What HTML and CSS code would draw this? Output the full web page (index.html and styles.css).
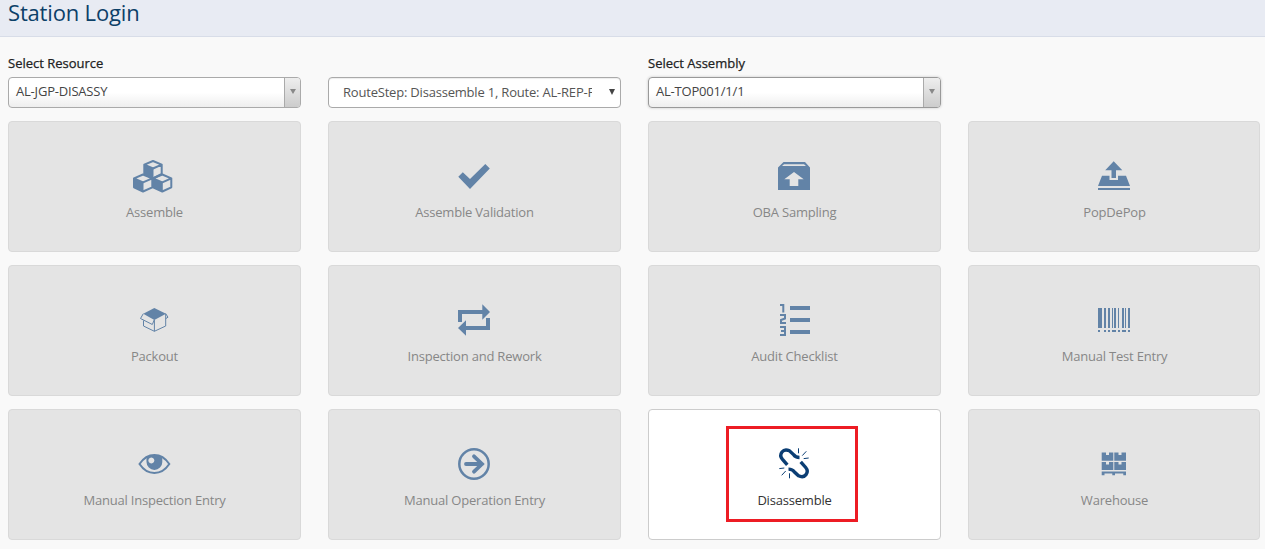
FILE: index.html
```
<!DOCTYPE html>
<html lang="en">
<head>
<meta charset="utf-8">
<title>Station Login</title>
<link rel="stylesheet" href="styles.css">
</head>
<body>
<header class="header"><h1 class="title">Station Login</h1></header>
<main class="content">
  <div class="filters">
    <div class="field">
      <label class="field-label">Select Resource</label>
      <div class="combo"><span class="combo-text">AL-JGP-DISASSY</span><span class="combo-button"><i class="arrow"></i></span></div>
    </div>
    <div class="field">
      <div class="select"><span class="select-text">RouteStep: Disassemble 1, Route: AL-REP-F</span><i class="arrow arrow-dark"></i></div>
    </div>
    <div class="field">
      <label class="field-label">Select Assembly</label>
      <div class="combo combo-focus"><span class="combo-text">AL-TOP001/1/1</span><span class="combo-button"><i class="arrow"></i></span></div>
    </div>
  </div>
  <div class="grid">
    <div class="card">
      <svg class="icon" viewBox="0 0 49 48">
        <g fill="none" stroke="currentColor" stroke-width="2" stroke-linejoin="round">
          <path d="M23 9l8.700 3.600v9.400L23 26.500 14.300 22v-9.400zM14.300 12.600L23 16.500l8.700-3.900"/>
          <path d="M13 22.500l9.300 3.800v9L13 39.500 4 35.300v-9zM4 26.300l9 4 9.300-4"/>
          <path d="M32.300 22.500l9 3.800v9l-9 4.200-9.300-4.200v-9zM23 26.300l9.300 4 9-4"/>
        </g>
        <path fill="currentColor" d="M14 12.500l9.500 4.200V27L14 22zM4 26.200l9.500 4.200v9.300L4 35.400zM23 26.200l9.800 4.200v9.300L23 35.400z"/>
      </svg>
      <span class="name">Assemble</span>
    </div>
    <div class="card">
      <svg class="icon" viewBox="0 0 49 48"><path fill="currentColor" d="M8.300 24.700l4.500-4.500 7.200 6.900L35.300 12l4.500 4.600L20 37z"/></svg>
      <span class="name">Assemble Validation</span>
    </div>
    <div class="card">
      <svg class="icon" viewBox="0 0 49 48"><path fill="currentColor" fill-rule="evenodd" d="M13.500 10h21.500l5 5.500V38H8V15.500zM14 12.200L12 14h24l-2-1.800zM24 20l-9.700 7.200h5.400V34h8.600v-6.800h5.400z"/></svg>
      <span class="name">OBA Sampling</span>
    </div>
    <div class="card">
      <svg class="icon" viewBox="0 0 49 48"><path fill="currentColor" d="M23.700 9.300l8.600 9H26V26h-4.500v-7.700h-6.300zM12 23.700h7.500V28H28v-4.300h8L40 34H8zM8 36h32v2H8z"/></svg>
      <span class="name">PopDePop</span>
    </div>
    <div class="card">
      <svg class="icon" viewBox="0 0 49 48">
        <path fill="currentColor" d="M24.300 12L36 17.700 24.300 24 13.300 17.700z"/>
        <path fill="none" stroke="currentColor" d="M13.300 17.700l-2.800 4.800 11.800 6 2-4.700M13.500 24.500V30l10.900 5.300L35.700 30V17.700l2.300 3.500-2.300 1.500M24.400 24v11.300"/>
      </svg>
      <span class="name">Packout</span>
    </div>
    <div class="card">
      <svg class="icon" viewBox="0 0 49 48"><path fill="currentColor" d="M8 14h24.300V8.300L40 16l-7.700 7.700V18H12v8H8zM40 34H16v5.700L8 32l8-7.700V30h20v-8h4z"/></svg>
      <span class="name">Inspection and Rework</span>
    </div>
    <div class="card">
      <svg class="icon" viewBox="0 0 49 48">
        <path fill="currentColor" d="M20 10h20v4H20zM20 22h20v4H20zM20 34h20v4H20z"/>
        <path fill="none" stroke="currentColor" stroke-width="2" d="M10 9h3.300v7.500M10 19h5v3.500l-4 1.500v3h5M10 31h5v8h-5M11 35h4"/>
      </svg>
      <span class="name">Audit Checklist</span>
    </div>
    <div class="card">
      <svg class="icon" viewBox="0 0 49 48"><path fill="currentColor" d="M8 12h4v20H8zM14 12h2v20h-2zM18 12h2v20h-2zM22 12h1v20h-1zM24 12h2v20h-2zM28 12h1v20h-1zM32 12h2v20h-2zM35 12h1v20h-1zM38 12h2v20h-2zM8 34h2v2H8zM14 34h2v2h-2zM18 34h2v2h-2zM22 34h4v2h-4zM28 34h2v2h-2zM32 34h4v2h-4zM38 34h2v2h-2z"/></svg>
      <span class="name">Manual Test Entry</span>
    </div>
    <div class="card">
      <svg class="icon" viewBox="0 0 49 48">
        <path fill="none" stroke="currentColor" stroke-width="2" d="M9.500 24Q15.500 15 24.400 15T39.300 24Q33.300 33 24.400 33T9.500 24z"/>
        <path fill="currentColor" fill-rule="evenodd" d="M17 17Q24.400 13 31.600 17Q32.800 19 32.300 22a7.900 7.900 0 0 1-15.800 0Q16 19 17 17zM21.300 17.500a3 3 0 1 0 .1 0z"/>
      </svg>
      <span class="name">Manual Inspection Entry</span>
    </div>
    <div class="card">
      <svg class="icon" viewBox="0 0 49 48" fill="none" stroke="currentColor"><circle cx="24" cy="24" r="14.700" stroke-width="2.500"/><path stroke-width="3.800" stroke-linecap="round" d="M16 24h16M24 16.300l8 7.700-8 7.700"/></svg>
      <span class="name">Manual Operation Entry</span>
    </div>
    <div class="card card-active">
      <svg class="icon" viewBox="0 0 49 48" fill="none" stroke="currentColor">
        <path stroke-width="3.400" d="M17.300 24.800l-5-5.700Q9.300 15.500 12 12t7.500-1.200L23.500 14.500q2 3 6 3M30.700 21.800l5 5.700q3 3.600.3 7.100t-7.500 1.200L24.500 32.100q-2-3-6-3"/>
        <path stroke-width="1" d="M28.500 8.300v5M36.300 11.300l-4 4.300M38.700 18l-5 .6M19.500 38.300v-5M11.700 35.300l4-4.300M9.300 28.600l5-.6"/>
      </svg>
      <span class="name">Disassemble</span>
      <span class="highlight"></span>
    </div>
    <div class="card">
      <svg class="icon" viewBox="0 0 49 48"><path fill="currentColor" d="M11.700 12.500H16V15h3v-2.500h4.300v8.200H11.700zM24.300 12.500h4.200V15h3v-2.500H36v8.200H24.300zM11.700 22H16v2.500h3V22h4.300v8H11.700zM24.300 22h4.200v2.500h3V22H36v8H24.300zM11.700 31.500H36v3.700h-2.700v-1.700H25v1.700h-2.700v-1.700h-7.800v1.700h-2.800z"/></svg>
      <span class="name">Warehouse</span>
    </div>
  </div>
</main>
</body>
</html>
```
FILE: styles.css
```
* { box-sizing: border-box; }
body {
  margin: 0;
  height: 549px;
  overflow: hidden;
  background: #f9f9f9;
  font: 400 13px/18px "Open Sans", sans-serif;
  color: #444;
}
.header {
  height: 37px;
  padding: 0 8px;
  background: #e8ebf3;
  border-bottom: 1px solid #d8dde8;
}
.title {
  margin: 0;
  font-size: 22px;
  line-height: 25px;
  font-weight: 400;
  letter-spacing: -.17px;
  color: #0c4068;
}
.content { padding: 17px 0 0 8px; }
.filters, .grid {
  display: grid;
  grid-template-columns: repeat(3, 293px) 292px;
  column-gap: 27px;
}
.filters { height: 67px; }
.field {
  display: flex;
  flex-direction: column;
  justify-content: flex-end;
  height: 54px;
}
.field-label {
  margin-bottom: 5px;
  color: #222;
  -webkit-text-stroke: .25px #222;
}
.combo, .select {
  display: flex;
  height: 31px;
  border: 1px solid #aaa;
  border-radius: 4px;
  background: #fff;
}
.combo {
  overflow: hidden;
  background: linear-gradient(#fff 50%, #eee);
}
.combo-focus { border-color: #999; box-shadow: 0 0 3px rgba(0, 0, 0, .2); }
.combo-text { flex: 1; padding-left: 7px; line-height: 27px; letter-spacing: -.2px; }
.combo-button {
  display: flex;
  justify-content: center;
  width: 16px;
  padding-top: 11px;
  border-left: 1px solid #aaa;
  background: linear-gradient(#eee, #ccc);
}
.combo-focus .combo-button { width: 17px; }
.arrow {
  width: 0;
  height: 0;
  border: 3px solid transparent;
  border-top: 5px solid #888;
  border-bottom: 0;
}
.arrow-dark { margin: 11px 0 0 17px; border-top: 6px solid #444; }
.select { box-shadow: inset 0 1px 1px rgba(0, 0, 0, .075); }
.select-text {
  width: 249px;
  margin-left: 14px;
  overflow: hidden;
  line-height: 29px;
  letter-spacing: -.2px;
  white-space: nowrap;
  color: #555;
}
.grid { grid-auto-rows: 131px; row-gap: 13px; }
.card {
  position: relative;
  display: flex;
  flex-direction: column;
  align-items: center;
  padding-top: 30px;
  border: 1px solid #d9d9d9;
  border-radius: 4px;
  background: #e4e4e4;
  color: #6283a7;
}
.card:nth-child(4n) { padding-left: 1px; }
.icon { width: 49px; height: 48px; }
.name { margin-top: 3px; color: #878787; letter-spacing: -.2px; }
.card-active { background: #fff; border-color: #ccc; color: #0b3e74; }
.card-active .name { color: #333; }
.highlight {
  position: absolute;
  left: 77px;
  top: 16px;
  width: 132px;
  height: 96px;
  border: 3px solid #ed1c24;
}
```
